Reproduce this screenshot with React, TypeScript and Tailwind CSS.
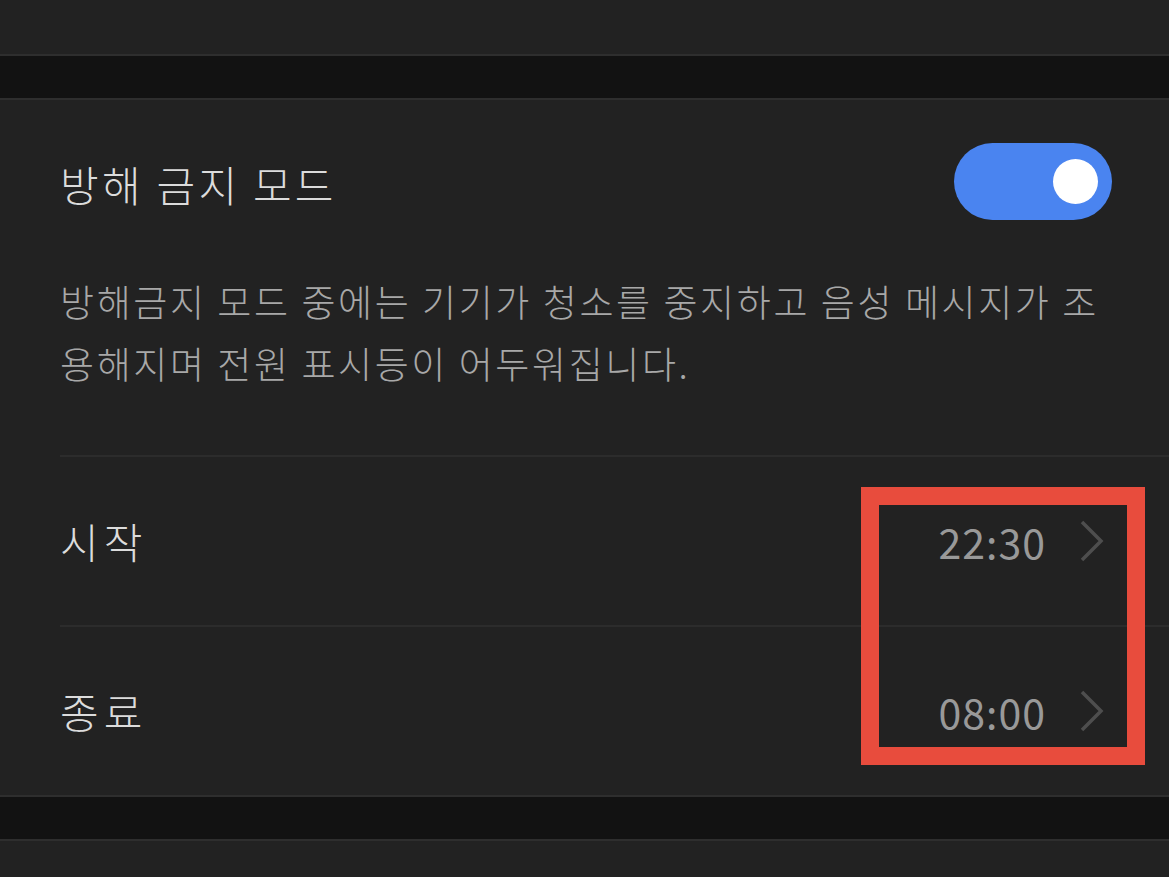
const font = { fontFamily: '"Noto Sans CJK KR", "Noto Sans", sans-serif' };

function Chevron() {
  return (
    <svg width="26" height="42" viewBox="0 0 26 42" fill="none" className="shrink-0">
      <path d="M3 2 L22 21 L3 40" stroke="#4e4e4e" strokeWidth="3.5" strokeLinecap="butt" strokeLinejoin="miter" />
    </svg>
  );
}

function TimeRow({ label, value }: { label: string; value: string }) {
  return (
    <div className="h-[168px] flex items-center justify-between pl-[60px] pr-[64px]">
      <span className="text-[42px] text-[#dcdcdc] leading-none tracking-[5px] font-light">{label}</span>
      <div className="flex items-center gap-[33px]">
        <span className="text-[41px] text-[#999999] leading-none tracking-[1px] font-normal">{value}</span>
        <Chevron />
      </div>
    </div>
  );
}

function Gap() {
  return (
    <>
      <div className="h-[2px] bg-[#2e2e2e]" />
      <div className="h-[42px] bg-[#121212]" />
      <div className="h-[2px] bg-[#2e2e2e]" />
    </>
  );
}

export default function App() {
  return (
    <div className="w-[1169px] h-[877px] overflow-hidden bg-[#222222] relative" style={font}>
      <div className="h-[54px] bg-[#222222]" />
      <Gap />

      <section className="bg-[#222222]">
        <div className="px-[60px] pr-[57px] pt-[43px] pb-[61px]">
          <div className="flex items-center justify-between">
            <h2 className="text-[42px] text-[#dcdcdc] leading-none font-light tracking-[3.3px] pt-[4px]">방해 금지 모드</h2>
            <div className="w-[158px] h-[77px] rounded-full bg-[#4a84f0] flex items-center justify-end pr-[14px]">
              <div className="w-[45px] h-[45px] rounded-full bg-white" />
            </div>
          </div>
          <p className="mt-[50px] text-[37px] leading-[62px] text-[#a8a8a8] tracking-[2.6px] font-light">
            방해금지 모드 중에는 기기가 청소를 중지하고 음성 메시지가 조<br />
            용해지며 전원 표시등이 어두워집니다.
          </p>
        </div>

        <div className="ml-[60px] h-[2px] bg-[#2c2c2c]" />
        <TimeRow label="시작" value="22:30" />
        <div className="ml-[60px] h-[2px] bg-[#2c2c2c]" />
        <TimeRow label="종료" value="08:00" />
      </section>

      <Gap />
      <div className="h-[37px] bg-[#222222]" />

      {/* annotation box */}
      <div className="absolute left-[861px] top-[487px] w-[284px] h-[278px] border-[18px] border-[#e84c3d] pointer-events-none" />
    </div>
  );
}
